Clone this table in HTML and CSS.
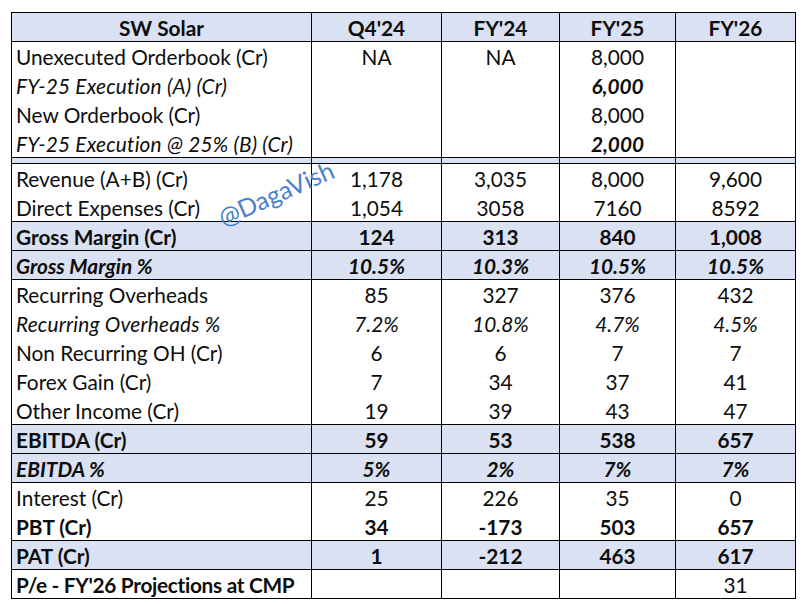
FILE: index.html
```html
<!DOCTYPE html>
<html lang="en">
<head>
<meta charset="utf-8">
<title>SW Solar</title>
<link rel="stylesheet" href="styles.css">
</head>
<body>
<div class="sheet">
<table class="fin">
  <colgroup>
    <col class="c-label"><col class="c-q4"><col class="c-fy24"><col class="c-fy25"><col class="c-fy26">
  </colgroup>
  <thead>
    <tr class="head shade">
      <th>SW Solar</th><th>Q4'24</th><th>FY'24</th><th>FY'25</th><th>FY'26</th>
    </tr>
  </thead>
  <tbody>
    <tr><td>Unexecuted Orderbook (Cr)</td><td>NA</td><td>NA</td><td>8,000</td><td></td></tr>
    <tr class="it"><td>FY-25 Execution (A) (Cr)</td><td></td><td></td><td class="bi">6,000</td><td></td></tr>
    <tr><td>New Orderbook (Cr)</td><td></td><td></td><td>8,000</td><td></td></tr>
    <tr class="it line"><td>FY-25 Execution @ 25% (B) (Cr)</td><td></td><td></td><td class="bi">2,000</td><td></td></tr>
    <tr class="band shade line"><td></td><td></td><td></td><td></td><td></td></tr>
    <tr><td>Revenue (A+B) (Cr)</td><td>1,178</td><td>3,035</td><td>8,000</td><td>9,600</td></tr>
    <tr class="line"><td>Direct Expenses (Cr)</td><td>1,054</td><td>3058</td><td>7160</td><td>8592</td></tr>
    <tr class="b shade line"><td>Gross Margin (Cr)</td><td>124</td><td>313</td><td>840</td><td>1,008</td></tr>
    <tr class="b it shade line"><td>Gross Margin %</td><td>10.5%</td><td>10.3%</td><td>10.5%</td><td>10.5%</td></tr>
    <tr><td>Recurring Overheads</td><td>85</td><td>327</td><td>376</td><td>432</td></tr>
    <tr class="it"><td>Recurring Overheads %</td><td>7.2%</td><td>10.8%</td><td>4.7%</td><td>4.5%</td></tr>
    <tr><td>Non Recurring OH (Cr)</td><td>6</td><td>6</td><td>7</td><td>7</td></tr>
    <tr><td>Forex Gain (Cr)</td><td>7</td><td>34</td><td>37</td><td>41</td></tr>
    <tr class="line"><td>Other Income (Cr)</td><td>19</td><td>39</td><td>43</td><td>47</td></tr>
    <tr class="b shade line"><td>EBITDA (Cr)</td><td>59</td><td>53</td><td>538</td><td>657</td></tr>
    <tr class="b it shade line"><td>EBITDA %</td><td>5%</td><td>2%</td><td>7%</td><td>7%</td></tr>
    <tr><td>Interest (Cr)</td><td>25</td><td>226</td><td>35</td><td>0</td></tr>
    <tr class="b line"><td>PBT (Cr)</td><td>34</td><td>-173</td><td>503</td><td>657</td></tr>
    <tr class="b shade line"><td>PAT (Cr)</td><td>1</td><td>-212</td><td>463</td><td>617</td></tr>
    <tr class="line"><td class="bl">P/e - FY'26 Projections at CMP</td><td></td><td></td><td></td><td>31</td></tr>
  </tbody>
</table>
<div class="watermark">@DagaVish</div>
</div>
</body>
</html>
```

FILE: styles.css
```css
html, body {
  margin: 0;
  padding: 0;
  background: #ffffff;
}

.sheet {
  position: relative;
  padding: 12px 0 0 11px;
  font-family: "Lato", "Open Sans", sans-serif;
  font-size: 20.8px;
  color: #0d0d0d;
}

.fin {
  border-collapse: collapse;
  table-layout: fixed;
  width: 784px;
}

.c-label { width: 300px; }
.c-q4 { width: 130px; }
.c-fy24 { width: 118px; }
.c-fy25 { width: 116px; }
.c-fy26 { width: 120px; }

.fin th,
.fin td {
  height: 29px;
  padding: 2px 4px 0 4px;
  box-sizing: border-box;
  border-left: 1px solid #000;
  border-right: 1px solid #000;
  text-align: center;
  vertical-align: middle;
  white-space: nowrap;
  line-height: 20px;
}

.fin td:first-child {
  text-align: left;
  padding-left: 4px;
}

.fin th {
  font-weight: 700;
  border-top: 1px solid #000;
  border-bottom: 1px solid #000;
}

.shade th,
.shade td {
  background: #d9e1f2;
}

.line td {
  border-bottom: 1px solid #000;
}

.band td {
  height: 6px;
  padding: 0;
  line-height: 0;
}

.it td { font-style: italic; }
.it td:first-child { letter-spacing: 0.2px; }
.b td { font-weight: 700; }
.b td:first-child { letter-spacing: 0; }
.bi { font-weight: 700; }
.bl { font-weight: 700; letter-spacing: -0.3px; }

.watermark {
  position: absolute;
  left: 214px;
  top: 178px;
  font-family: "Lato", "Open Sans", sans-serif;
  font-size: 25px;
  color: #4a7fd0;
  transform: rotate(-24deg);
  transform-origin: center;
  white-space: nowrap;
}
```
